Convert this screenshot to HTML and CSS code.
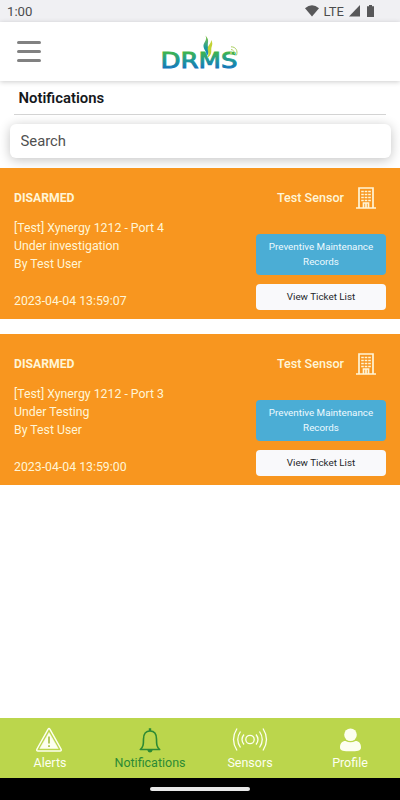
FILE: index.html
```
<!DOCTYPE html>
<html lang="en">
<head>
    <meta charset="UTF-8">
    <meta name="viewport" content="width=device-width, initial-scale=1.0">
    <title>DRMS - Notifications</title>
    <link rel="stylesheet" href="styles.css">
</head>
<body>
    <svg width="0" height="0" class="sprite">
        <symbol id="building" viewBox="0 0 22 22">
            <path d="M1 21h20M4 21V1h14v20M8.500 20.500v-4.500h5v4.500M11 16v5" fill="none" stroke="currentColor" stroke-width="1.700"/>
            <path d="M6.200 4.500h9.600M6.200 7.500h9.600M6.200 10.500h9.600M6.200 13.500h9.600" fill="none" stroke="currentColor" stroke-width="1.600" stroke-dasharray="2.600 0.900"/>
        </symbol>
    </svg>

    <div class="status-bar">
        <span class="time">1:00</span>
        <div class="status-icons">
            <svg class="wifi" width="14" height="12" viewBox="0 0 14 12"><path d="M0 3.200Q7-2.800 14 3.200L7 11.500z"/></svg>
            <span>LTE</span>
            <svg class="signal" width="11" height="12" viewBox="0 0 11 12"><path d="M11 0v11.500H0z"/></svg>
            <svg class="battery" width="7" height="12" viewBox="0 0 7 12"><path d="M2 0h3v1.300h2V12H0V1.300h2z"/></svg>
        </div>
    </div>

    <header class="header">
        <button class="menu-btn" aria-label="Menu"><span></span><span></span><span></span></button>
        <svg class="logo" width="78" height="36" viewBox="0 0 78 36">
            <defs>
                <linearGradient id="word" gradientUnits="userSpaceOnUse" x1="0" y1="17" x2="0" y2="34">
                    <stop offset="0" stop-color="#3fb54a"/>
                    <stop offset="0.500" stop-color="#1d969b"/>
                    <stop offset="1" stop-color="#1272bd"/>
                </linearGradient>
                <linearGradient id="flame" x1="0" y1="0" x2="0" y2="1">
                    <stop offset="0" stop-color="#8cc63f"/>
                    <stop offset="0.600" stop-color="#1b9a9e"/>
                    <stop offset="1" stop-color="#0f7fc0"/>
                </linearGradient>
            </defs>
            <text x="-1.500" y="33" textLength="77" lengthAdjust="spacingAndGlyphs" fill="url(#word)" stroke="url(#word)">DRMS</text>
            <path d="M43.300 0.500C46 5 41 7.500 41.500 11.500c.5 4 3.500 4.500 3 9.500 4.500-4.500 1-7.500 1.300-11 .3-4 1.200-6-2.500-9.500z" fill="url(#flame)"/>
            <path d="M49 5c.5 4-3.500 5-3.300 9 .2 3 1.800 5-.7 9 5.500-3.500 4-6.500 4.300-9.500.5-3 2.200-5-.3-8.500z" fill="#c2d235"/>
            <g fill="none" stroke="#a9cf5d" stroke-width="1">
                <path d="M69 14.500a4 4 0 0 1 3.500 4.500"/>
                <path d="M69 11.800c5 0 7 4 5.500 8.500"/>
            </g>
            <circle cx="69" cy="18" r="1.200" fill="#a9cf5d"/>
        </svg>
    </header>

    <main>
        <h1 class="page-title">Notifications</h1>
        <input class="search" type="text" placeholder="Search">

        <section class="card">
            <div class="card-head">
                <strong>DISARMED</strong>
                <div class="sensor"><span>Test Sensor</span><svg width="22" height="22"><use href="#building"/></svg></div>
            </div>
            <div class="card-body">
                <div class="details">
                    <p>[Test] Xynergy 1212 - Port 4</p>
                    <p>Under investigation</p>
                    <p>By Test User</p>
                    <p class="date">2023-04-04 13:59:07</p>
                </div>
                <div class="actions">
                    <button class="btn btn-blue">Preventive Maintenance Records</button>
                    <button class="btn btn-light">View Ticket List</button>
                </div>
            </div>
        </section>

        <section class="card">
            <div class="card-head">
                <strong>DISARMED</strong>
                <div class="sensor"><span>Test Sensor</span><svg width="22" height="22"><use href="#building"/></svg></div>
            </div>
            <div class="card-body">
                <div class="details">
                    <p>[Test] Xynergy 1212 - Port 3</p>
                    <p>Under Testing</p>
                    <p>By Test User</p>
                    <p class="date">2023-04-04 13:59:00</p>
                </div>
                <div class="actions">
                    <button class="btn btn-blue">Preventive Maintenance Records</button>
                    <button class="btn btn-light">View Ticket List</button>
                </div>
            </div>
        </section>
    </main>

    <nav class="tabs">
        <a href="#" class="tab">
            <svg width="28" height="26" viewBox="0.500 0 28 26">
                <path d="M12.500 2.300q1-1.500 2 0L25.500 22q.8 2-1 2H2.500q-1.800 0-1-2z" fill="none" stroke="currentColor" stroke-width="1.500" stroke-linejoin="round"/>
                <path d="M13.500 5.500L22.700 21.500H4.300z" fill="currentColor" stroke="currentColor" stroke-width="0.500" stroke-linejoin="round"/>
                <path d="M13.500 9.500v7M13.500 18.300v1.800" stroke="#a3bf3c" stroke-width="1.600"/>
            </svg>
            <span>Alerts</span>
        </a>
        <a href="#" class="tab active">
            <svg width="28" height="26" viewBox="0 0 28 26">
                <path d="M4.300 22.500c3-2.500 3.200-5 3.200-10.500 0-5 2.500-8 6.500-8s6.500 3 6.500 8c0 5.500.2 8 3.200 10.500z" fill="none" stroke="currentColor" stroke-width="1.600" stroke-linejoin="round"/>
                <path d="M12.800 1.300h2.400V4h-2.400zM11.300 23h5.400q-.7 2.500-2.700 2.500T11.300 23z" fill="currentColor"/>
            </svg>
            <span>Notifications</span>
        </a>
        <a href="#" class="tab">
            <svg width="36" height="26" viewBox="0 0 36 26" fill="none" stroke="currentColor" stroke-width="1.300">
                <circle cx="18" cy="12.500" r="4.200"/>
                <path d="M12 7.500q-4 5 0 10M24 7.500q4 5 0 10M8.500 4.500q-5.500 8 0 16M27.500 4.500q5.500 8 0 16M5 1.500q-7 11 0 22M31 1.500q7 11 0 22"/>
            </svg>
            <span>Sensors</span>
        </a>
        <a href="#" class="tab">
            <svg width="28" height="26" viewBox="-0.500 0 28 26" fill="currentColor">
                <circle cx="14" cy="7.800" r="6.300"/>
                <path d="M3.500 20.500c0-4 2-6.500 5.500-6.500q5 2.500 10 0c3.500 0 5.500 2.500 5.500 6.500 0 3.500-4 3.800-10.500 3.800s-10.500-.3-10.500-3.800z"/>
            </svg>
            <span>Profile</span>
        </a>
    </nav>
    <div class="system-bar"><span></span></div>
</body>
</html>
```
FILE: styles.css
```
:root {
    --orange: #f8961f;
    --blue: #4badd5;
    --green: #bbd64c;
    --dark-green: #2c8a34;
}

* {
    margin: 0;
    padding: 0;
    box-sizing: border-box;
}

body {
    font-family: Roboto, 'Liberation Sans', sans-serif;
    background: #fff;
    height: 100vh;
    display: flex;
    flex-direction: column;
    overflow: hidden;
}

button {
    font-family: inherit;
    border: none;
}

.sprite {
    position: absolute;
}

.status-bar {
    height: 22px;
    flex-shrink: 0;
    background: #f0f0f3;
    display: flex;
    justify-content: space-between;
    align-items: center;
    padding: 0 26px 0 7px;
    font-size: 13.2px;
    color: #4c4c4e;
}

.status-icons {
    display: flex;
    align-items: center;
    font-size: 13px;
    fill: #58585a;
}

.wifi {
    margin-right: 5px;
}

.signal {
    margin: 0 7px 0 5px;
}

.header {
    height: 59px;
    flex-shrink: 0;
    display: flex;
    align-items: center;
    padding: 0 17px;
    background: #fff;
    box-shadow: 0 1px 5px rgba(0, 0, 0, 0.2);
}

.menu-btn {
    width: 24px;
    background: none;
    display: flex;
    flex-direction: column;
    gap: 5.5px;
}

.menu-btn span {
    height: 3.5px;
    border-radius: 2px;
    background: #818181;
}

.logo {
    margin-left: 121px;
    margin-top: 3px;
    overflow: visible;
}

.logo text {
    font-family: 'DejaVu Sans', sans-serif;
    font-size: 21px;
    stroke-width: 0.9px;
}

main {
    flex: 1;
}

.page-title {
    margin: 0 14px;
    padding-left: 4.5px;
    height: 34px;
    line-height: 34px;
    border-bottom: 1px solid #d4d4d4;
    font-size: 14.9px;
    font-weight: 600;
    color: #15181b;
}

.search {
    display: block;
    width: 381px;
    height: 34px;
    margin: 9px 9px 10px 10px;
    padding: 0 10.5px;
    border: none;
    border-radius: 6px;
    background: #fff;
    box-shadow: 0 2px 12px rgba(0, 0, 0, 0.24);
    font-family: inherit;
    font-size: 14.8px;
}

.search::placeholder {
    color: #505050;
}

.card {
    height: 151px;
    margin-bottom: 15px;
    padding: 18px 14px 0;
    background: var(--orange);
    color: #fff5d6;
    font-size: 12.3px;
}

.card-head,
.sensor,
.card-body {
    display: flex;
    justify-content: space-between;
}

.card-head,
.sensor {
    align-items: center;
}

.card-head {
    height: 23px;
}

.card-head strong {
    font-size: 12.2px;
}

.sensor {
    gap: 11px;
    padding-right: 9px;
    font-size: 12.6px;
    font-weight: 500;
}

.card-body {
    margin-top: 9px;
}

.details {
    padding-top: 0.5px;
    line-height: 18.4px;
}

.date {
    margin-top: 18px;
}

.actions {
    width: 130px;
    margin-top: 16px;
    display: flex;
    flex-direction: column;
    gap: 9px;
}

.btn {
    border-radius: 4px;
    font-size: 9.8px;
    line-height: 15px;
}

.btn-blue {
    height: 41px;
    padding: 0 8px 1px;
    background: var(--blue);
    color: #eefaff;
}

.btn-light {
    height: 26px;
    padding-bottom: 1px;
    background: #f9f9fb;
    color: #26282b;
}

.tabs {
    height: 60px;
    flex-shrink: 0;
    display: grid;
    grid-template-columns: repeat(4, 1fr);
    background: var(--green);
}

.tab {
    display: flex;
    flex-direction: column;
    align-items: center;
    padding-top: 9px;
    color: #fdfff0;
    font-size: 12.5px;
    line-height: 19px;
    text-decoration: none;
}

.tab.active {
    color: var(--dark-green);
}

.system-bar {
    height: 22px;
    flex-shrink: 0;
    display: flex;
    justify-content: center;
    align-items: center;
    background: #000;
}

.system-bar span {
    width: 100px;
    height: 4px;
    border-radius: 2px;
    background: #e8e8e8;
}
```
